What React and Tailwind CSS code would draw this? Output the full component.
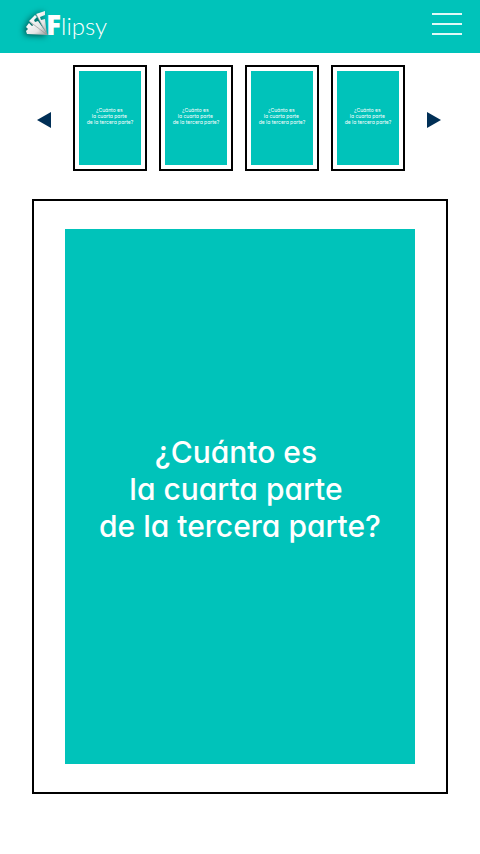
const cards = [1, 2, 3, 4];

function Question() {
  return (
    <>
      ¿Cuánto es&nbsp;
      <br />
      la cuarta parte&nbsp;
      <br />
      de la tercera parte?
    </>
  );
}

function Logo() {
  return (
    <a href="#" aria-label="Flipsy" className="flex h-9 items-baseline text-white">
      <svg viewBox="0 0 22 26" className="h-[26px] w-[22px] overflow-visible drop-shadow-[-2px_1px_3px_rgba(0,0,0,0.6)]" aria-hidden="true">
        <defs>
          <linearGradient id="fan" x1="0" y1="0" x2="1" y2="1">
            <stop offset="0" stopColor="#fff" />
            <stop offset="0.6" stopColor="#e4e5e5" />
            <stop offset="1" stopColor="#8e9292" />
          </linearGradient>
        </defs>
        <path d="M2 18 L5 14 L8 17 L11 15 L24 26 L3 25 L2 22 L4 20 Z" fill="url(#fan)" />
        <path d="M5 12 L11 6 L13 8 L10 11 L11 13 L14 12 L24 26 L17 24 Z" fill="url(#fan)" />
        <path d="M12 5 L21 2 L21 6 L16 8 L17 11 L21 10 L23 26 Z" fill="url(#fan)" />
        <path d="M5 12 L22 25 M12 5 L23 25" stroke="#8a8f8f" strokeWidth="0.6" fill="none" />
      </svg>
      <span className="font-['Open_Sans','Liberation_Sans',sans-serif] text-[28px] leading-8 font-extrabold">F</span>
      <span className="font-[Lato,'Liberation_Sans',sans-serif] text-2xl leading-8 font-light">lipsy</span>
    </a>
  );
}

function Arrow({ label, points }) {
  return (
    <button type="button" aria-label={label} className="flex h-8 w-[14px] shrink-0 items-center justify-center">
      <svg viewBox="0 0 14 16" className="h-4 w-[14px]" aria-hidden="true">
        <polygon points={points} fill="#002f56" />
      </svg>
    </button>
  );
}

export default function App() {
  return (
    <div className="min-h-screen bg-white font-[Inter,'Liberation_Sans',sans-serif]">
      <header className="flex items-start justify-between bg-[#00c3ba] pt-2 pr-[18px] pb-[9px] pl-6">
        <Logo />
        <button type="button" aria-label="Menú" className="mt-[5px] flex w-[30px] flex-col gap-2">
          <span className="h-0.5 w-full bg-[#e0f8f7]" />
          <span className="h-0.5 w-full bg-[#e0f8f7]" />
          <span className="h-0.5 w-full bg-[#e0f8f7]" />
        </button>
      </header>
      <main>
        <nav aria-label="Tarjetas" className="mr-[39px] ml-[37px] mt-3 flex items-center justify-between">
          <div className="pt-1"><Arrow label="Anterior" points="0,8 14,0 14,16" /></div>
          <div className="flex gap-3">
            {cards.map((card) => (
              <button
                key={card}
                type="button"
                aria-label={`Tarjeta ${card}`}
                className="w-[74px] border-2 border-black bg-white px-1 py-1"
              >
                <span className="flex h-[94px] items-center justify-center bg-[#00c3ba] text-[5px] leading-[6px] whitespace-nowrap text-white [font-feature-settings:'cv11']">
                  <span className="pb-1"><Question /></span>
                </span>
              </button>
            ))}
          </div>
          <div className="pt-1"><Arrow label="Siguiente" points="14,8 0,0 0,16" /></div>
        </nav>
        <article className="mx-8 mt-[28px] border-2 border-black px-[31px] py-7">
          <div className="flex h-[535px] items-center justify-center bg-[#00c3ba]">
            <p className="pb-3.5 text-center text-[30px] leading-[37px] font-medium whitespace-nowrap text-white [font-feature-settings:'cv11']">
              <Question />
            </p>
          </div>
        </article>
      </main>
    </div>
  );
}
